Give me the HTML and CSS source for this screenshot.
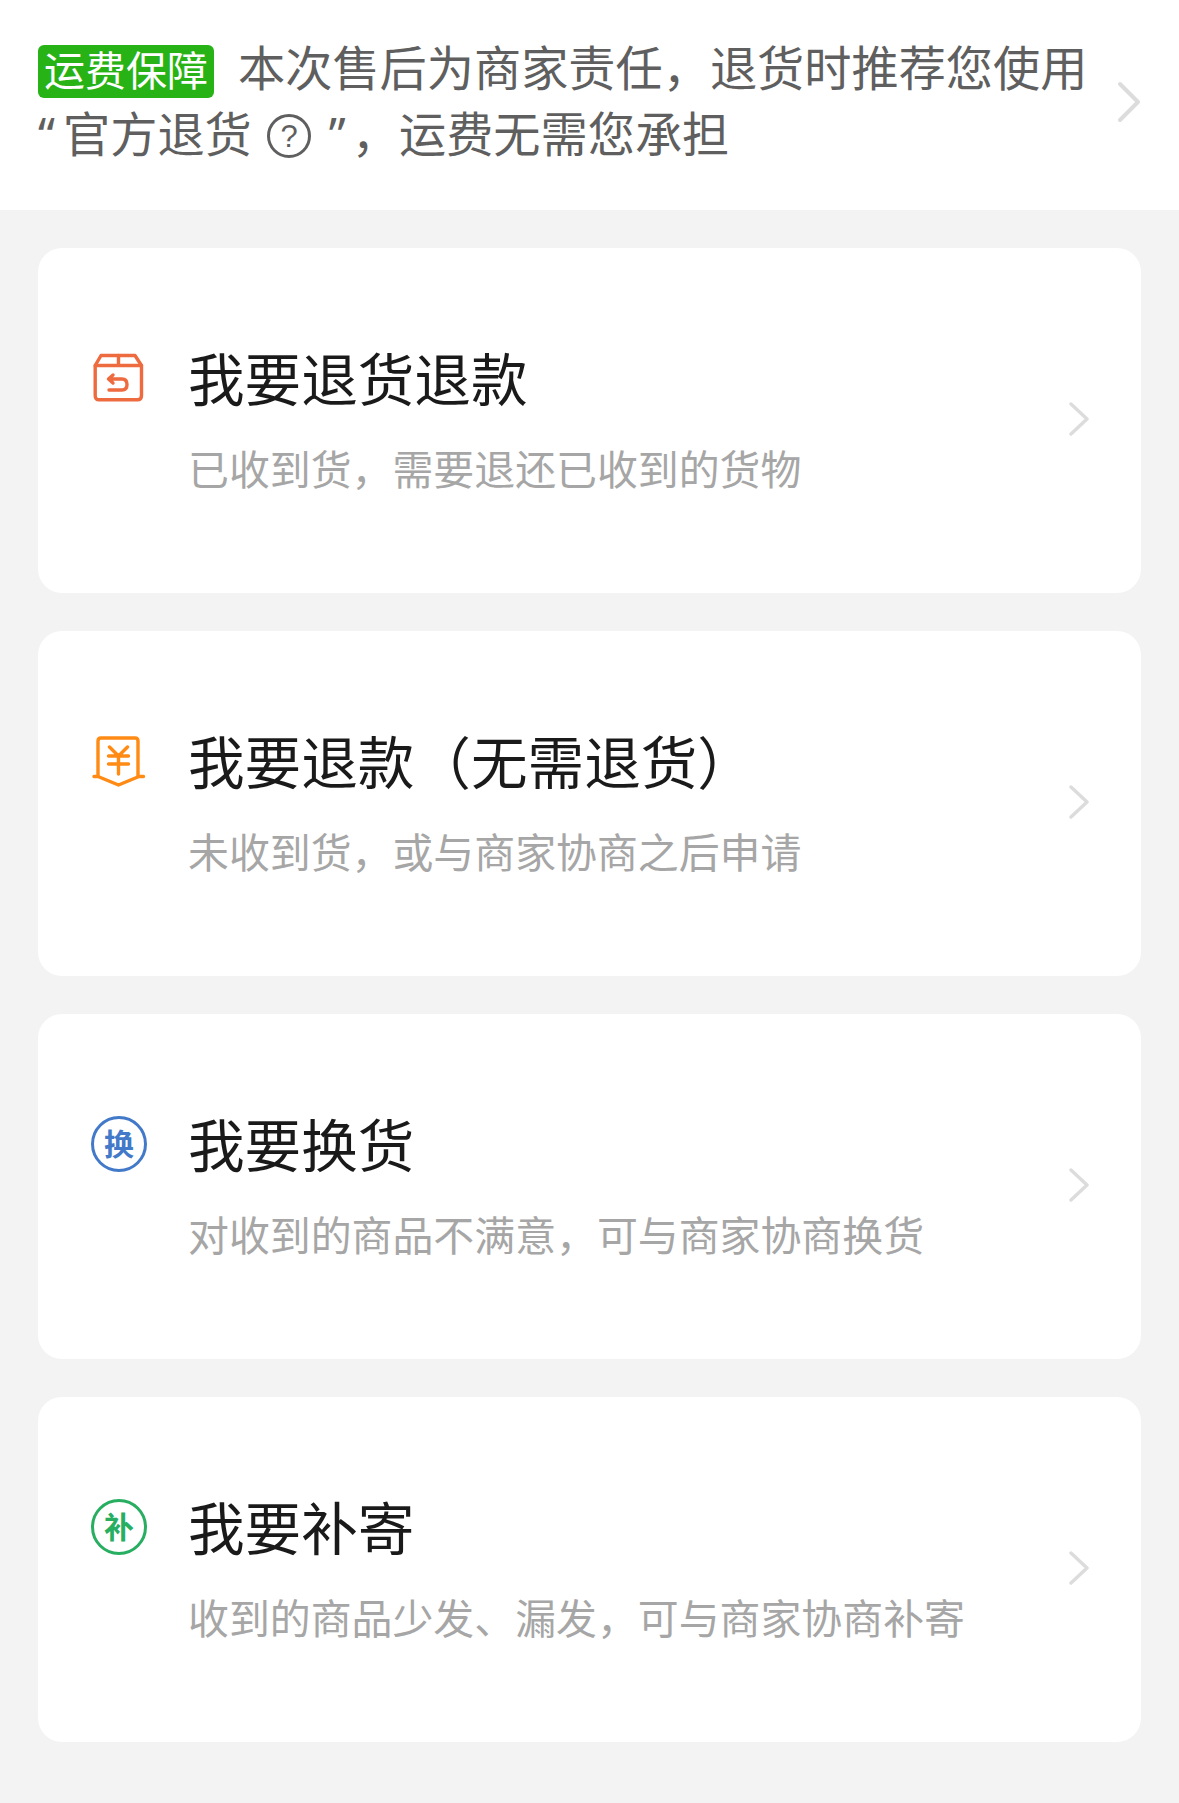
FILE: index.html
```html
<!DOCTYPE html>
<html lang="zh-CN">
<head>
    <meta charset="UTF-8">
    <meta name="viewport" content="width=device-width, initial-scale=1.0">
    <title>选择售后类型</title>
    <link rel="stylesheet" href="styles.css">
</head>
<body>
    <div class="notice">
        <p class="notice-text">
            <span class="badge">运费保障</span>本次售后为商家责任，退货时推荐您使用<span class="quote">“</span>官方退货<svg class="help" viewBox="0 0 44 44"><circle cx="22" cy="22" r="20.5" fill="none" stroke="#5f5f5f" stroke-width="3"/><text x="22" y="33" text-anchor="middle" class="help-mark">?</text></svg><span class="quote quote-end">”</span>，运费无需您承担
        </p>
        <svg class="chevron chevron-notice" viewBox="0 0 24 42"><path d="M3 3 L21 21 L3 39" fill="none" stroke="#dcdcdc" stroke-width="4" stroke-linecap="round" stroke-linejoin="round"/></svg>
    </div>

    <div class="list">
        <div class="card">
            <svg class="icon" viewBox="0 0 60 60">
                <g fill="none" stroke="#ee6a3f" stroke-width="3.4" stroke-linecap="round" stroke-linejoin="round">
                    <path d="M12 8.5 H46 L52.5 18.5 V48.5 Q52.5 52.8 48.5 52.8 H10.2 Q6.2 52.8 6.2 48.5 V18.5 Z"/>
                    <path d="M6.2 18.5 H52.5 M29.5 8.5 V18.5"/>
                    <path d="M24 28 L19.5 32 L24 36 M19.5 32 H33 Q38 32 38 37.5 Q38 43 33 43 H20"/>
                </g>
            </svg>
            <div class="card-body">
                <h2 class="card-title">我要退货退款</h2>
                <p class="card-desc">已收到货，需要退还已收到的货物</p>
            </div>
            <svg class="chevron" viewBox="0 0 20 34"><path d="M2 2 L18 17 L2 32" fill="none" stroke="#dcdcdc" stroke-width="3.4" stroke-linecap="round" stroke-linejoin="round"/></svg>
        </div>

        <div class="card">
            <svg class="icon" viewBox="0 0 60 60">
                <g fill="none" stroke="#ff8a14" stroke-width="3.4" stroke-linecap="round" stroke-linejoin="round">
                    <path d="M9 46 V11 Q9 8 12 8 H46 Q49 8 49 11 V46"/>
                    <path d="M5 46.5 H9 L29.5 55 L50 46.5 H54.5"/>
                    <path d="M20.5 17 L29.5 26 L38.5 17 M19.5 26 H39.5 M19.5 34 H39.5 M29.5 26 V44"/>
                </g>
            </svg>
            <div class="card-body">
                <h2 class="card-title">我要退款（无需退货）</h2>
                <p class="card-desc">未收到货，或与商家协商之后申请</p>
            </div>
            <svg class="chevron" viewBox="0 0 20 34"><path d="M2 2 L18 17 L2 32" fill="none" stroke="#dcdcdc" stroke-width="3.4" stroke-linecap="round" stroke-linejoin="round"/></svg>
        </div>

        <div class="card">
            <svg class="icon" viewBox="0 0 60 60">
                <circle cx="30" cy="31" r="26.5" fill="none" stroke="#4279c8" stroke-width="3"/>
                <text x="30" y="41.5" text-anchor="middle" class="icon-char icon-blue">换</text>
            </svg>
            <div class="card-body">
                <h2 class="card-title">我要换货</h2>
                <p class="card-desc">对收到的商品不满意，可与商家协商换货</p>
            </div>
            <svg class="chevron" viewBox="0 0 20 34"><path d="M2 2 L18 17 L2 32" fill="none" stroke="#dcdcdc" stroke-width="3.4" stroke-linecap="round" stroke-linejoin="round"/></svg>
        </div>

        <div class="card">
            <svg class="icon" viewBox="0 0 60 60">
                <circle cx="30" cy="31" r="26.5" fill="none" stroke="#27ae60" stroke-width="3"/>
                <text x="30" y="41.5" text-anchor="middle" class="icon-char icon-green">补</text>
            </svg>
            <div class="card-body">
                <h2 class="card-title">我要补寄</h2>
                <p class="card-desc">收到的商品少发、漏发，可与商家协商补寄</p>
            </div>
            <svg class="chevron" viewBox="0 0 20 34"><path d="M2 2 L18 17 L2 32" fill="none" stroke="#dcdcdc" stroke-width="3.4" stroke-linecap="round" stroke-linejoin="round"/></svg>
        </div>
    </div>
</body>
</html>
```

FILE: styles.css
```css
body {
    margin: 0;
    padding: 0;
    font-family: "Noto Sans CJK SC", "Noto Sans", sans-serif;
    background: #f3f3f3;
    overflow: hidden;
}

.notice {
    display: flex;
    align-items: center;
    height: 210px;
    padding: 0 38px;
    box-sizing: border-box;
    background: #fff;
}

.notice-text {
    flex: 1;
    margin: -10px 0 0;
    padding-right: 28px;
    font-size: 47.2px;
    line-height: 66px;
    color: #5f5f5f;
}

.badge {
    display: inline-block;
    height: 53px;
    margin-right: 24px;
    padding: 0 6px;
    border-radius: 6px;
    background: #27b216;
    color: #fff;
    font-size: 41px;
    line-height: 46px;
    vertical-align: 0;
}

.quote {
    display: inline-block;
    width: 25px;
    font-family: "Noto Sans", sans-serif;
}

.quote-end {
    width: 23px;
    margin-left: 18px;
}

.help {
    width: 44px;
    height: 44px;
    margin-left: 15px;
    vertical-align: -6px;
}

.help-mark {
    font-family: "Liberation Sans", sans-serif;
    font-size: 31px;
    fill: #5f5f5f;
}

.chevron {
    flex: none;
    width: 20px;
    height: 34px;
}

.chevron-notice {
    width: 24px;
    height: 42px;
    margin-top: -6px;
}

.list {
    display: flex;
    flex-direction: column;
    gap: 38px;
    padding: 38px;
}

.card {
    display: flex;
    align-items: flex-start;
    height: 345px;
    padding: 95px 52px 0 51px;
    box-sizing: border-box;
    background: #fff;
    border-radius: 24px;
}

.icon {
    flex: none;
    width: 60px;
    height: 60px;
    margin-top: 4px;
    margin-right: 39px;
}

.icon-char {
    font-size: 30px;
    font-weight: 700;
}

.icon-blue {
    fill: #4279c8;
}

.icon-green {
    fill: #27ae60;
}

.card-body {
    flex: 1;
}

.card-title {
    margin: 0;
    font-size: 56.6px;
    font-weight: 400;
    line-height: 66px;
    color: #1a1a1a;
}

.card-desc {
    margin: 32px 0 0;
    font-size: 40.9px;
    line-height: 54px;
    color: #a6a6a6;
}

.card .chevron {
    margin-top: 59px;
}
```
